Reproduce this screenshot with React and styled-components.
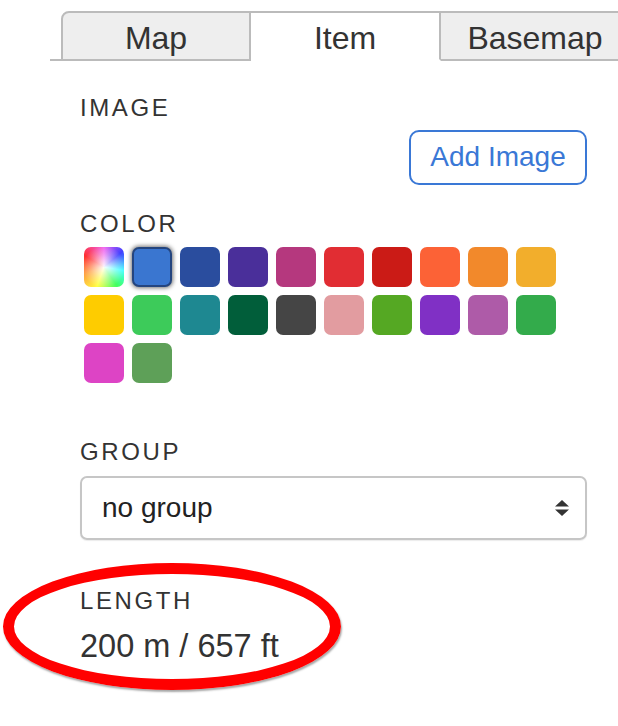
import React from "react";
import styled, { createGlobalStyle } from "styled-components";

const GlobalStyle = createGlobalStyle`
  html, body {
    margin: 0;
    padding: 0;
    background: #ffffff;
  }
  body {
    font-family: "Liberation Sans", Arial, Helvetica, sans-serif;
    color: #333333;
  }
`;

const Page = styled.div`
  position: relative;
  width: 618px;
  height: 726px;
  overflow: hidden;
`;

const TabBar = styled.div`
  display: flex;
  margin-left: 50px;
  padding: 11px 0 0 11px;
  border-bottom: 2px solid #bbbbbb;
  height: 48px;
`;

const Tab = styled.div`
  flex: 0 0 190px;
  box-sizing: border-box;
  height: 50px;
  display: flex;
  align-items: center;
  justify-content: center;
  font-size: 32px;
  color: #333333;
  background: ${(p) => (p.$active ? "#ffffff" : "#eeeeee")};
  border: 2px solid #bbbbbb;
  border-left-width: ${(p) => (p.$first ? "2px" : "0")};
  border-bottom-color: ${(p) => (p.$active ? "#ffffff" : "#bbbbbb")};
  border-top-left-radius: ${(p) => (p.$first ? "8px" : "0")};
  padding-top: 5px;
`;

const Panel = styled.div`
  padding: 0 31px 0 30px;
  margin-left: 50px;
`;

const Label = styled.div`
  font-size: 24px;
  line-height: 28.8px;
  letter-spacing: 2.6px;
  color: #333333;
  margin-top: ${(p) => p.$top}px;
`;

const ButtonRow = styled.div`
  display: flex;
  justify-content: flex-end;
  margin-top: 7px;
`;

const AddButton = styled.button`
  box-sizing: border-box;
  width: 178px;
  height: 55px;
  border: 2px solid #3a78d6;
  border-radius: 10px;
  background: #ffffff;
  color: #3a78d6;
  font-family: "Liberation Sans", Arial, sans-serif;
  font-size: 28px;
  padding: 0;
`;

const Swatches = styled.div`
  display: grid;
  grid-template-columns: repeat(10, 40px);
  grid-auto-rows: 40px;
  gap: 8px;
  margin: 8px 0 0 4px;
`;

const Swatch = styled.div`
  box-sizing: border-box;
  border-radius: 7px;
  background: ${(p) => p.$color};
  ${(p) =>
    p.$selected &&
    `border: 2px solid #24457f; box-shadow: 0 0 4px 1px rgba(0,0,0,0.55);`}
`;

const RainbowSwatch = styled.div`
  border-radius: 7px;
  background: radial-gradient(
      circle at 50% 50%,
      rgba(255, 255, 255, 0.95) 0%,
      rgba(255, 255, 255, 0.35) 45%,
      rgba(255, 255, 255, 0) 75%
    ),
    conic-gradient(
      from 0deg,
      #f060f0,
      #4040ff 50deg,
      #40ffff 100deg,
      #40ff60 145deg,
      #ffff40 200deg,
      #ffa040 250deg,
      #ff3030 300deg,
      #f060f0 360deg
    );
`;

const Select = styled.div`
  box-sizing: border-box;
  height: 64px;
  margin-top: 10px;
  border: 2px solid #c6c6c6;
  border-radius: 7px;
  box-shadow: 0 1px 1px rgba(0, 0, 0, 0.08);
  display: flex;
  align-items: center;
  justify-content: space-between;
  padding: 0 15px 0 20px;
  font-size: 28px;
  color: #222222;
`;

const Value = styled.div`
  font-size: 32.5px;
  line-height: 37px;
  margin-top: 12px;
  color: #333333;
`;

const Highlight = styled.div`
  position: absolute;
  left: 3px;
  top: 563px;
  width: 338px;
  height: 127px;
  box-sizing: border-box;
  border: 11px solid #ff0000;
  border-radius: 50%;
  box-shadow: 1px 2px 2px rgba(0, 0, 0, 0.35);
  pointer-events: none;
`;

const colors = [
  "#3a76d0", "#2a4d9e", "#4a2f9a", "#b5387e", "#e12d33", "#cb1b16", "#fc6236", "#f2892b", "#f2ae2c",
  "#fecc00", "#3dcb5a", "#1e8891", "#015e3a", "#454545", "#e29ca0", "#55a823", "#8030c5", "#ae5ba8", "#33ab4b",
  "#dd44c5", "#5ea058",
];

const Arrows = () => (
  <svg width="16" height="16" viewBox="0 0 16 16">
    <polygon points="8,0 15,6.5 1,6.5" fill="#333" />
    <polygon points="1,9.5 15,9.5 8,16" fill="#333" />
  </svg>
);

export default function App() {
  return (
    <Page>
      <GlobalStyle />
      <TabBar>
        <Tab $first>Map</Tab>
        <Tab $active>Item</Tab>
        <Tab>Basemap</Tab>
      </TabBar>
      <Panel>
        <Label $top={33}>IMAGE</Label>
        <ButtonRow>
          <AddButton>Add Image</AddButton>
        </ButtonRow>
        <Label $top={25}>COLOR</Label>
        <Swatches>
          <RainbowSwatch />
          {colors.map((c, i) => (
            <Swatch key={i} $color={c} $selected={i === 0} />
          ))}
        </Swatches>
        <Label $top={55}>GROUP</Label>
        <Select>
          <span>no group</span>
          <Arrows />
        </Select>
        <Label $top={47}>LENGTH</Label>
        <Value>200 m / 657 ft</Value>
      </Panel>
      <Highlight />
    </Page>
  );
}
